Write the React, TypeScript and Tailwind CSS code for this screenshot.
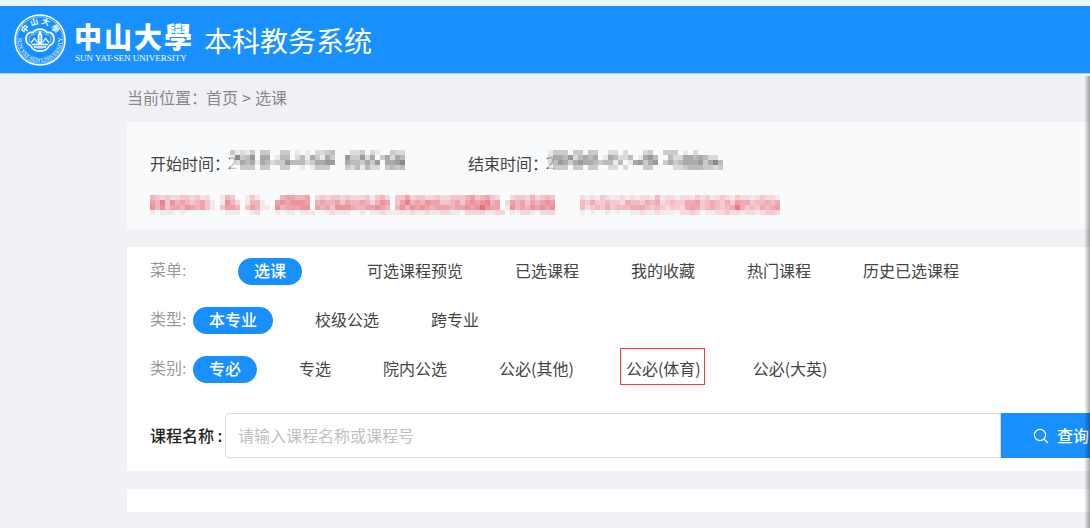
import clsx from "clsx";

const menus = ["选课", "可选课程预览", "已选课程", "我的收藏", "热门课程", "历史已选课程"];
const types = ["本专业", "校级公选", "跨专业"];
const categories = ["专必", "专选", "院内公选", "公必(其他)", "公必(体育)", "公必(大英)"];

// One digit per 5px block, 0 is clear and 9 is the darkest.
const startMask = [
  "31213033003301010223400022302100322",
  "17346055014402415315300633625035254",
  "02545154233644423556600544353605567",
  "00333033003300101333000324142203434",
];
const endMask = [
  "13330330330022020002300333010200000",
  "25546245450154224015640042255454220",
  "24653565543441401563560353455563574",
  "03330330330022020003300002234443323",
];
const noticeMask = [
  "432322332312001430013100004554450232332322231342033523322322333453453200233242343",
  "547364543453101642014410056566650454453544542465035745465533453565674502545354565",
  "646355465453103554035411064555660545366654455654046465654555455656865501645465656",
  "101110100000000111001200010110111001211100101121111121121122110222211220102210222",
];
const linkMask = [
  "2121321121212214122122132312321322123221",
  "4353343325443545234335563454353655344545",
  "4234353444555434323325653454345853435456",
  "1010010100112112111022320112232212212332",
];

function Mosaic({ rows, color, className }: { rows: string[]; color: string; className?: string }) {
  const cols = rows[0].length;
  return (
    <svg
      className={clsx("shrink-0", className)}
      width={cols * 5}
      height={20}
      viewBox={`0 0 ${cols * 5} 20`}
      shapeRendering="crispEdges"
      aria-hidden="true"
    >
      {rows.map((row, y) =>
        row.split("").map((level, x) => (
          <rect key={`${x}-${y}`} x={x * 5} y={y * 5} width={5} height={5} fill={color} fillOpacity={Number(level) * 0.09} />
        ))
      )}
    </svg>
  );
}

function Seal() {
  return (
    <svg width="52" height="52" viewBox="0 0 52 52" fill="none" stroke="#fff" className="shrink-0" aria-label="中山大学校徽">
      <defs>
        <path id="seal-top" d="M10 26a16 16 0 0 1 32 0" />
        <path id="seal-bottom" d="M4.5 20a22.3 22.3 0 1 0 43 0" />
      </defs>
      <circle cx="26" cy="26" r="25" strokeWidth="1.6" />
      <circle cx="26" cy="26" r="23.200" strokeWidth="0.5" />
      <text fill="#fff" stroke="none" fontSize="8" fontWeight="700" fontFamily="Noto Sans CJK TC, sans-serif">
        <textPath href="#seal-top" startOffset="50%" textAnchor="middle">中 山 大 學</textPath>
      </text>
      <text fill="#fff" stroke="none" fontSize="6" fontWeight="400" fontFamily="Liberation Serif, serif">
        <textPath href="#seal-bottom" startOffset="50%" textAnchor="middle">SUN YAT-SEN UNIVERSITY</textPath>
      </text>
      <path
        d="M19 18.500c3-4.500 11-4.500 14 0 8-1.500 9.500 10 2.500 13-3 7.500-16 7.500-19 0-7-3-5.500-14.500 2.500-13Z"
        strokeWidth="1.7"
      />
      <path d="M20 20.500c2.500-4 9.500-4 12 0 6-.8 7 7.500 1.500 9.500-2 6-13 6-15 0-5.500-2-4.500-10.300 1.500-9.500Z" strokeWidth="0.5" />
      <path d="M26 16l2.300 5v9h-4.600v-9Z" fill="#fff" stroke="none" />
      <path d="M26 21v7" stroke="#1890ff" strokeWidth="0.8" />
      <path d="M18 30.500h16M20 33h12" strokeWidth="1.3" />
      <path d="M17 28.500l3.500-4 3 4M28.500 28.500l3-4 3.500 4" strokeWidth="1.2" />
    </svg>
  );
}

interface FilterRowProps {
  label: string;
  items: string[];
  wide?: boolean;
  marked?: string;
}

function FilterRow({ label, items, wide, marked }: FilterRowProps) {
  return (
    <div className="flex h-[27px] items-center whitespace-nowrap" role="group" aria-label={label}>
      <span
        className={clsx(
          "shrink-0 pb-0.5 font-['Liberation_Serif','Noto_Sans_CJK_SC',serif] leading-[25px] text-[#999]",
          wide ? "w-[88px]" : "w-[43px]"
        )}
      >
        {label}:
      </span>
      <div className="flex gap-5">
        {items.map((item, i) => (
          <button
            key={item}
            type="button"
            className={clsx(
              "relative h-[27px] shrink-0 rounded-full px-4 pb-0.5 leading-[25px]",
              i === 0 ? "bg-[#1890ff] font-medium text-white" : "text-[#444]",
              i === 0 && (wide ? "mr-[29px]" : "mr-1.5")
            )}
          >
            {item}
            {item === marked && (
              <span className="absolute -top-2 -bottom-0.5 left-2.5 w-[85px] border border-[#f5383c]" />
            )}
          </button>
        ))}
      </div>
    </div>
  );
}

export default function App() {
  return (
    <div className="min-h-screen overflow-hidden bg-[#f0f1f5] font-['Noto_Sans_CJK_SC',sans-serif] text-base">
      <div className="h-1.5 bg-[#ebf3fb]" />
      <header className="flex h-[68px] items-center border-b border-[#a9d3fb] bg-[#1890ff] pl-3.5 text-white">
        <Seal />
        <div className="ml-2 w-[118px] shrink-0 pt-1.5">
          <div className="flex justify-between text-[28px] leading-8 font-black">
            <span>中</span>
            <span>山</span>
            <span>大</span>
            <span>學</span>
          </div>
          <div className="pl-px font-['Liberation_Serif',serif] text-[9px] leading-[13px] whitespace-nowrap">
            SUN YAT-SEN UNIVERSITY
          </div>
        </div>
        <h1 className="ml-3 text-[28px] leading-10 whitespace-nowrap">本科教务系统</h1>
      </header>

      <main className="ml-[127px]">
        <nav className="flex h-12 items-center pb-0.5 whitespace-nowrap text-[#888]">
          <span className="w-[79px]">当前位置：</span>
          <a href="#home">首页</a>
          <span className="mx-1">&gt;</span>
          <a href="#courses">选课</a>
        </nav>

        <section className="h-[107px] bg-[#f8fafc] pt-7 pl-[23px] text-[#444]">
          <div className="flex h-7 whitespace-nowrap">
            <div className="flex w-[318px] shrink-0">
              <span className="w-[78px] shrink-0 leading-[26px]">开始时间：</span>
              <span className="w-0.5 leading-6">2</span>
              <Mosaic rows={startMask} color="#4a4a4a" className="bg-[#f8fafc]/70" />
            </div>
            <div className="flex">
              <span className="w-[78px] shrink-0 leading-[26px]">结束时间：</span>
              <span className="w-0.5 leading-6">2</span>
              <Mosaic rows={endMask} color="#4a4a4a" className="bg-[#f8fafc]/70" />
            </div>
          </div>
          <div className="flex pt-[17px]">
            <Mosaic rows={noticeMask} color="#e23a48" />
            <Mosaic rows={linkMask} color="#e84a58" className="ml-[25px]" />
          </div>
        </section>

        <section className="mt-[18px] bg-white pt-[11px] pb-[13px] pl-[23px]">
          <div className="flex flex-col gap-[22px]">
            <FilterRow label="菜单" items={menus} wide />
            <FilterRow label="类型" items={types} />
            <FilterRow label="类别" items={categories} marked="公必(体育)" />
          </div>
          <form className="mt-[30px] flex h-[45px] items-center" onSubmit={(e) => e.preventDefault()}>
            <label htmlFor="course" className="w-[75px] shrink-0 pb-0.5 font-medium whitespace-nowrap text-[#222]">
              课程名称 :
            </label>
            <input
              id="course"
              type="text"
              placeholder="请输入课程名称或课程号"
              className="h-full min-w-0 flex-1 rounded-l border border-[#d9d9d9] bg-white px-3 pb-0.5 outline-none placeholder:text-[#bfbfbf]"
            />
            <button
              type="submit"
              className="flex h-full w-[89px] shrink-0 items-center gap-2 overflow-hidden bg-[#1890ff] pl-8 font-medium whitespace-nowrap text-white"
            >
              <svg width="16" height="16" viewBox="0 0 16 16" fill="none" stroke="currentColor" strokeWidth="1.2" className="shrink-0">
                <circle cx="7" cy="7" r="5.600" />
                <path d="M11 11l4 4" />
              </svg>
              <span className="pb-0.5">查询</span>
            </button>
          </form>
        </section>

        <section className="mt-[18px] h-[23px] bg-white" />
      </main>

      <div className="pointer-events-none fixed top-[76px] right-0 bottom-0 w-1.5 bg-linear-to-r from-black/0 to-black/35" />
    </div>
  );
}
